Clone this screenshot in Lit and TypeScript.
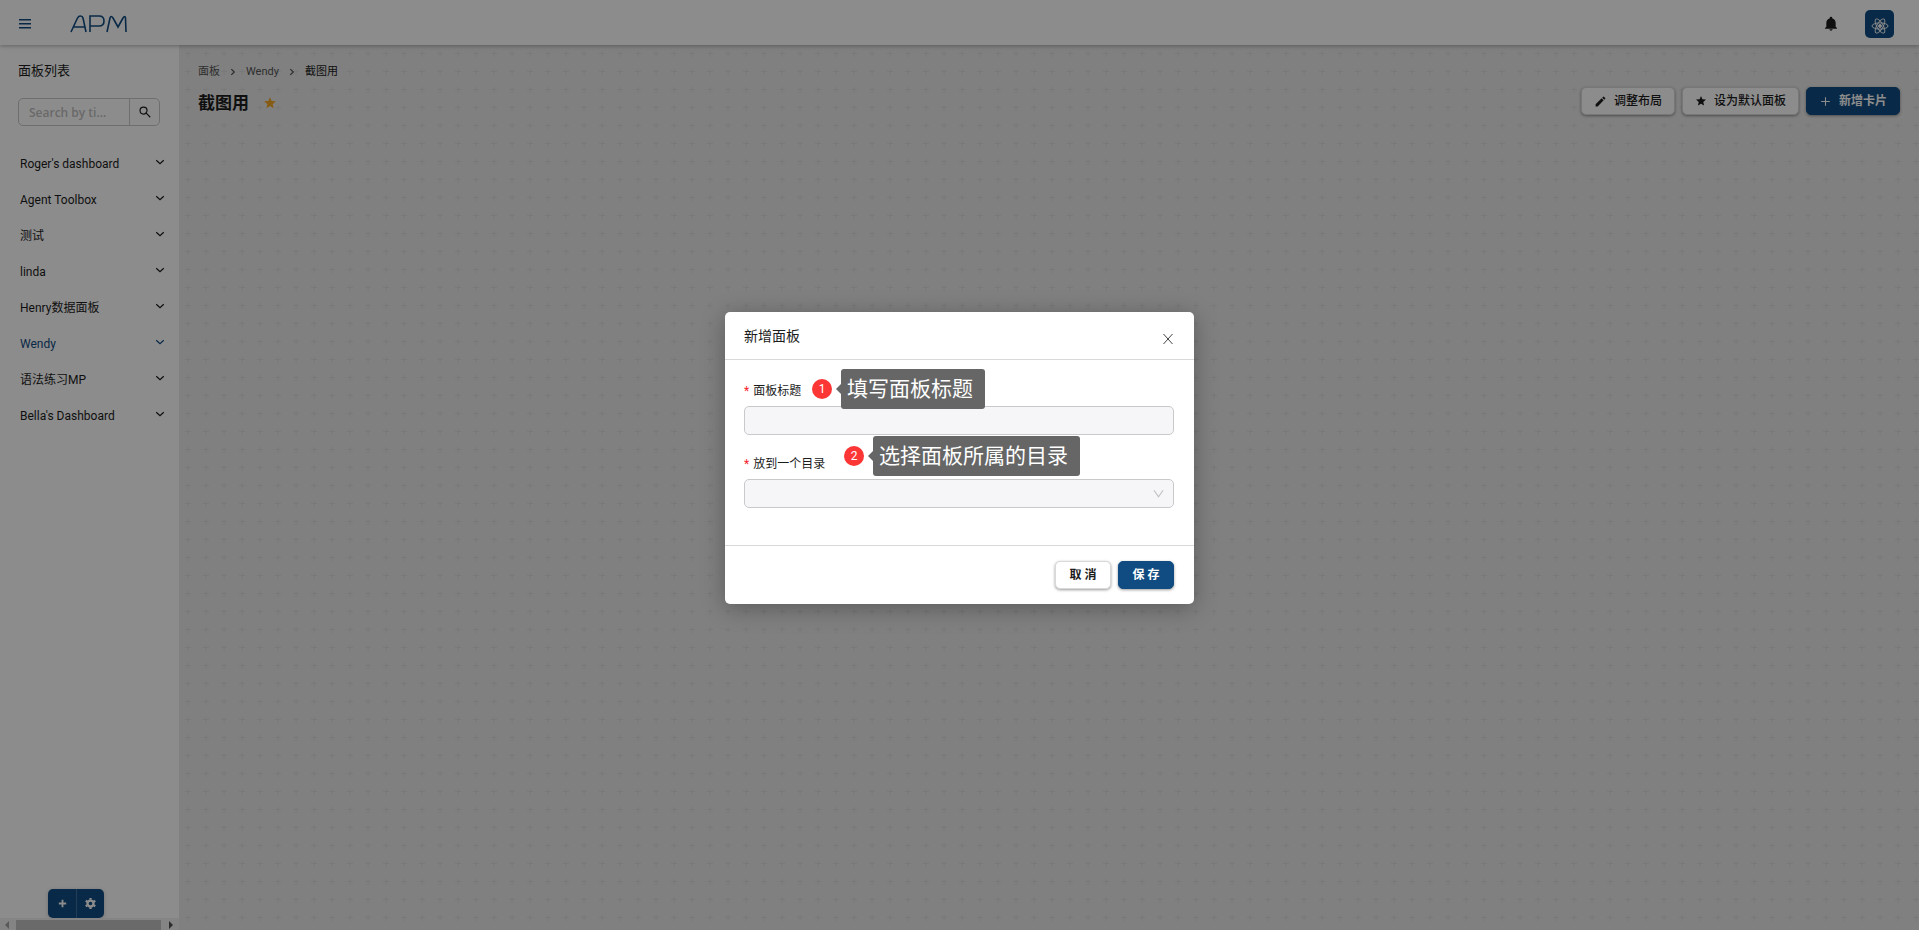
import { LitElement, html, css, svg } from "lit";
import { customElement, state } from "lit/decorators.js";

const FOLDERS = [
  "Roger's dashboard",
  "Agent Toolbox",
  "测试",
  "linda",
  "Henry数据面板",
  "Wendy",
  "语法练习MP",
  "Bella's Dashboard",
];

const STAR = "M12 17.3 18.2 21l-1.6-7L22 9.2l-7.2-.6L12 2 9.2 8.6 2 9.2 7.5 14l-1.7 7z";

const icon = (d: string, size = 14) => html`
  <svg width=${size} height=${size} viewBox="0 0 24 24" fill="currentColor" aria-hidden="true">
    <path d=${d}></path>
  </svg>`;

const stroke = (d: string, size: number, width: number) => html`
  <svg width=${size} height=${size} viewBox="0 0 24 24" fill="none" stroke="currentColor"
    stroke-width=${width} aria-hidden="true"><path d=${d}></path></svg>`;

@customElement("app-root")
export class AppRoot extends LitElement {
  @state() private active = "Wendy";

  static styles = css`
    :host {
      display: flex;
      flex-direction: column;
      height: 100vh;
      overflow: hidden;
      color: #1c1c1c;
      font: 12px/20px Roboto, "Noto Sans CJK SC", sans-serif;
      position: relative;
    }
    * { box-sizing: border-box; }
    button, input, select { font: inherit; color: inherit; margin: 0; }
    button { cursor: pointer; }
    svg { display: block; flex: none; }
    h1, h2, ul, ol { margin: 0; padding: 0; }
    ul, ol { list-style: none; }
    a { color: inherit; text-decoration: none; }

    .topbar {
      display: flex;
      align-items: center;
      flex: none;
      height: 45px;
      padding: 3px 25px 0 18px;
      background: #fff;
      box-shadow: 0 1px 4px rgba(0, 0, 0, 0.3);
      z-index: 1;
    }
    .plain { border: 0; background: none; padding: 0; display: flex; }
    .menu { color: #104c81; }
    .logo { color: #104c81; margin-left: 38px; }
    .tools { margin-left: auto; display: flex; align-items: center; gap: 26px; }
    .avatar {
      width: 29px;
      height: 28px;
      border-radius: 5px;
      background: #104c81;
      color: #fff;
      align-items: center;
      justify-content: center;
      padding-top: 4px;
    }

    .body { display: flex; flex: 1; min-height: 0; }
    .side {
      width: 179px;
      flex: none;
      display: flex;
      flex-direction: column;
      background: #fff;
    }
    .side-title { font-size: 13px; font-weight: 400; line-height: 20px; padding: 16px 18px 0; }
    .search {
      display: flex;
      height: 28px;
      margin: 17px 19px 20px 18px;
      border: 1px solid #c9c9c9;
      border-radius: 5px;
    }
    .search input {
      flex: 1;
      min-width: 0;
      border: 0;
      background: none;
      padding: 2px 10px 0;
      outline: 0;
      font-family: "Open Sans", sans-serif;
      font-weight: 600;
      text-overflow: ellipsis;
    }
    .search input::placeholder { color: #bfbfbf; opacity: 1; }
    .search button {
      width: 30px;
      border-left: 1px solid #c9c9c9;
      align-items: center;
      justify-content: center;
    }
    .folders { flex: 1; min-height: 0; overflow: hidden; }
    .folder {
      width: 100%;
      height: 36px;
      align-items: center;
      justify-content: space-between;
      padding: 0 14px 0 20px;
      text-align: left;
    }
    .folder svg { margin-bottom: 4px; }
    .folder.on { color: #104c81; }
    .actions {
      display: flex;
      align-self: flex-start;
      margin-left: 48px;
      border-radius: 5px;
      background: #104c81;
      color: #fff;
      box-shadow: 0 1px 4px rgba(0, 0, 0, 0.2);
    }
    .actions button { width: 28px; height: 29px; align-items: center; justify-content: center; }
    .actions button + button { border-left: 1px solid #3f6f9a; }
    .scroll {
      display: flex;
      align-items: center;
      justify-content: space-between;
      height: 12px;
      padding: 2px 6px 0 5px;
      background: #f1f1f1;
      color: #505050;
    }
    .thumb { flex: 1; height: 10px; margin: 0 8px 0 7px; background: #c1c1c1; }
    .dim { color: #a3a3a3; }

    .canvas {
      flex: 1;
      min-width: 0;
      padding: 17px 19px;
      background: #e9e9e9 url("data:image/svg+xml,%3Csvg xmlns='http://www.w3.org/2000/svg' width='18' height='18'%3E%3Cpath d='M6 8.5h6M9 6v6' stroke='%23dcdcdc' fill='none'/%3E%3C/svg%3E") 0 0;
    }
    .crumbs { display: flex; align-items: center; line-height: 20px; font-size: 11px; color: #555; }
    .crumbs li { display: flex; align-items: center; }
    .crumbs svg { margin: 0 8px; }
    .here { color: #1c1c1c; }
    .head { display: flex; align-items: center; gap: 7px; margin-top: 4px; height: 30px; }
    .head h1 { font-size: 17px; line-height: 24px; font-weight: 700; padding-top: 3px; }
    .fav { color: #f5a623; margin: 0 auto 0 7px; padding-top: 4px; }
    .btn {
      display: flex;
      align-items: center;
      justify-content: center;
      height: 28px;
      padding: 0 12px;
      gap: 7px;
      border: 1px solid #d9d9d9;
      border-radius: 5px;
      background: #fff;
      font-weight: 500;
      white-space: nowrap;
      box-shadow: 0 1px 3px rgba(0, 0, 0, 0.4);
    }
    .primary { background: #104c81; border-color: #104c81; color: #fff; font-weight: 700; }

    .mask {
      position: absolute;
      inset: 0;
      z-index: 2;
      display: flex;
      justify-content: center;
      align-items: flex-start;
      padding-top: 312px;
      background: rgba(0, 0, 0, 0.45);
    }
    .dialog {
      width: 469px;
      background: #fff;
      border-radius: 5px;
      box-shadow: 0 4px 24px rgba(0, 0, 0, 0.3);
    }
    .dialog header {
      display: flex;
      justify-content: space-between;
      align-items: center;
      height: 48px;
      padding: 0 20px 0 19px;
      border-bottom: 1px solid #d9d9d9;
    }
    .dialog h2 { font-size: 14px; line-height: 20px; font-weight: 400; }
    .close { color: #444; padding-top: 6px; }
    .fields { display: grid; gap: 19px; padding: 21px 20px 37px 19px; }
    .field { display: grid; gap: 5px; position: relative; }
    .field label { line-height: 20px; }
    .req { color: #f5222d; margin-right: 4px; }
    .control {
      width: 100%;
      height: 29px;
      border: 1px solid #c9c9cb;
      border-radius: 5px;
      background: #f6f6f9;
      padding: 0 10px;
      outline: 0;
      appearance: none;
    }
    .select { display: grid; align-items: center; }
    .select > * { grid-area: 1 / 1; }
    .select svg { justify-self: end; margin-right: 10px; color: #bfbfbf; pointer-events: none; }
    .dialog footer {
      display: flex;
      justify-content: flex-end;
      gap: 7px;
      padding: 15px 20px 15px 19px;
      border-top: 1px solid #d9d9d9;
    }
    .dialog footer .btn { width: 56px; font-weight: 700; }

    .note { position: absolute; top: -12px; left: 68px; display: flex; align-items: center; }
    .note.second { top: -18px; left: 100px; }
    .num {
      width: 20px;
      height: 20px;
      border-radius: 50%;
      background: #fc3535;
      color: #fff;
      text-align: center;
    }
    .arrow { border: 5px solid transparent; border-right-color: #666; border-left: 0; margin-left: 4px; }
    .tip {
      height: 40px;
      padding: 0 12px 0 6px;
      border-radius: 3px;
      background: #666;
      color: #fff;
      font-size: 21px;
      line-height: 40px;
      white-space: nowrap;
    }
  `;

  render() {
    return html`
      <header class="topbar">
        <button class="plain menu" aria-label="菜单">
          <svg width="14" height="10" viewBox="0 0 14 10" fill="currentColor">
            <path d="M1 0h12v1.5H1zM1 4h12v1.5H1zM1 8h12v1.5H1z"></path>
          </svg>
        </button>
        <svg class="logo" width="58" height="18" viewBox="0 0 58 18" fill="none"
          stroke="currentColor" stroke-width="1.6" role="img" aria-label="APM">
          <path d="M1 17 7.500 3Q8.500 1 10.500 1Q12.500 1 13 3L16 17M3 12H15"></path>
          <path d="M20 17V1H29Q34 1 34 6T29 11H20"></path>
          <path d="M37 17 40 3Q41 0 43 3L48 12 53 3Q55 0 55.500 3L56 17"></path>
        </svg>
        <div class="tools">
          <button class="plain" aria-label="通知">
            ${icon("M12 22a2.500 2.500 0 0 0 2.500-2h-5a2.500 2.500 0 0 0 2.500 2zm7-6v-5.500c0-3.500-2-6-5-6.700V3a2 2 0 0 0-4 0v.8C7 4.500 5 7 5 10.500V16l-2 2v1h18v-1z", 16)}
          </button>
          <button class="plain avatar" aria-label="账户">
            <svg width="18" height="16" viewBox="0 0 24 22" fill="none" stroke="currentColor" stroke-width="1.300">
              ${[0, 60, 120].map((a) => svg`<ellipse cx="12" cy="11" rx="11" ry="4.300" transform="rotate(${a} 12 11)"></ellipse>`)}
              <circle cx="12" cy="11" r="2" fill="currentColor"></circle>
            </svg>
          </button>
        </div>
      </header>

      <div class="body">
        <nav class="side">
          <h2 class="side-title">面板列表</h2>
          <form class="search" @submit=${(e: Event) => e.preventDefault()}>
            <input type="text" aria-label="Search by title" placeholder="Search by ti..." />
            <button class="plain" aria-label="搜索">${stroke("M14.500 14.500 21 21M9.500 3.500a6 6 0 1 0 0 12a6 6 0 0 0 0-12z", 14, 2)}</button>
          </form>
          <ul class="folders">
            ${FOLDERS.map((f) => html`<li>
              <button class="plain folder ${f === this.active ? "on" : ""}" @click=${() => (this.active = f)}>
                ${f}${stroke("M3 8l9 8 9-8", 10, 3)}
              </button></li>`)}
          </ul>
          <div class="actions">
            <button class="plain" aria-label="新增">${stroke("M12 4v16M4 12h16", 11, 4)}</button>
            <button class="plain" aria-label="设置">
              <svg width="11" height="11" viewBox="0 0 24 24" fill="none" stroke="currentColor">
                <circle cx="12" cy="12" r="6.500" stroke-width="5"></circle>
                <path d="M12 0v4M12 20v4M1.600 6l3.500 2M18.900 16l3.500 2M22.400 6l-3.500 2M5.100 16l-3.500 2" stroke-width="5"></path>
              </svg>
            </button>
          </div>
          <div class="scroll" aria-hidden="true">
            <svg class="dim" width="4" height="8" viewBox="0 0 4 8" fill="currentColor"><path d="M4 0v8L0 4z"></path></svg>
            <div class="thumb"></div>
            <svg width="4" height="8" viewBox="0 0 4 8" fill="currentColor"><path d="M0 0v8l4-4z"></path></svg>
          </div>
        </nav>

        <main class="canvas">
          <ol class="crumbs">
            <li><a href="#">面板</a>${stroke("M8 5l7 7-7 7", 10, 3)}</li>
            <li><a href="#">Wendy</a>${stroke("M8 5l7 7-7 7", 10, 3)}</li>
            <li class="here">截图用</li>
          </ol>
          <div class="head">
            <h1>截图用</h1>
            <button class="plain fav" aria-label="收藏">${icon(STAR, 14)}</button>
            <button class="btn">${icon("M3 17.200V21h3.800L17.800 9.900l-3.700-3.700zM20.700 7a1 1 0 0 0 0-1.400l-2.300-2.300a1 1 0 0 0-1.400 0l-1.800 1.800 3.700 3.700z", 13)}调整布局</button>
            <button class="btn">${icon(STAR, 12)}设为默认面板</button>
            <button class="btn primary">${stroke("M12 4v16M4 12h16", 13, 2)}新增卡片</button>
          </div>
        </main>
      </div>

      <div class="mask">
        <section class="dialog" role="dialog" aria-modal="true" aria-labelledby="dialog-title">
          <header>
            <h2 id="dialog-title">新增面板</h2>
            <button class="plain close" aria-label="关闭">${stroke("M3 2l18 20M21 2L3 22", 12, 2)}</button>
          </header>
          <div class="fields">
            <div class="field">
              <label for="title"><span class="req">*</span>面板标题</label>
              <input class="control" id="title" type="text" />
              <div class="note">
                <span class="num">1</span><span class="arrow"></span><span class="tip">填写面板标题</span>
              </div>
            </div>
            <div class="field">
              <label for="folder"><span class="req">*</span>放到一个目录</label>
              <div class="select">
                <select class="control" id="folder">
                  <option value=""></option>
                  ${FOLDERS.map((f) => html`<option>${f}</option>`)}
                </select>
                ${stroke("M2 5l10 14L22 5", 11, 2.4)}
              </div>
              <div class="note second">
                <span class="num">2</span><span class="arrow"></span><span class="tip">选择面板所属的目录</span>
              </div>
            </div>
          </div>
          <footer>
            <button class="btn">取 消</button>
            <button class="btn primary">保 存</button>
          </footer>
        </section>
      </div>
    `;
  }
}
